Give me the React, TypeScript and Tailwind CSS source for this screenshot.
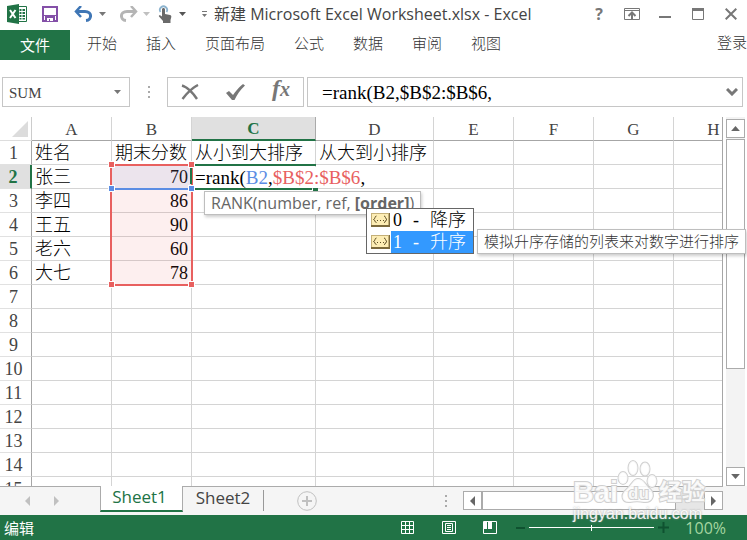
import type { ReactNode } from "react";
import clsx from "clsx";

const ribbonTabs = ["开始", "插入", "页面布局", "公式", "数据", "审阅", "视图"];

const columns = [
  { name: "A", width: "w-20" },
  { name: "B", width: "w-20" },
  { name: "C", width: "w-[124px]" },
  { name: "D", width: "w-[118px]" },
  { name: "E", width: "w-20" },
  { name: "F", width: "w-20" },
  { name: "G", width: "w-20" },
  { name: "H", width: "w-20" },
];

const cells: string[][] = [
  ["姓名", "期末分数", "从小到大排序", "从大到小排序"],
  ["张三", "70"],
  ["李四", "86"],
  ["王五", "90"],
  ["老六", "60"],
  ["大七", "78"],
];

const orderOptions = [
  { value: "0", text: "降序", active: false },
  { value: "1", text: "升序", active: true },
];

const rowNumbers = Array.from({ length: 15 }, (_, i) => i + 1);

const uiFont = "font-['Open_Sans','Noto_Sans_CJK_SC',sans-serif]";
const cellFont = "font-['Liberation_Serif','Noto_Sans_CJK_SC',serif]";

function Caret({ className }: { className?: string }) {
  return (
    <svg viewBox="0 0 7 4" className={clsx("h-1 w-[7px]", className)} fill="currentColor">
      <path d="M0 0h7L3.500 4z" />
    </svg>
  );
}

function IconButton({ label, className, children }: { label: string; className?: string; children: ReactNode }) {
  return (
    <button type="button" aria-label={label} className={clsx("grid shrink-0 place-items-center", className)}>
      {children}
    </button>
  );
}

function ExcelLogo() {
  return (
    <svg viewBox="0 0 20 20" className="size-5 shrink-0">
      <path d="M11 2.500h8.500v15H11z" fill="#fff" stroke="#217346" />
      <path d="M12.500 5h2v2h-2zm3 0h2.500v2h-2.500zm-3 3h2v2h-2zm3 0h2.500v2h-2.500zm-3 3h2v2h-2zm3 0h2.500v2h-2.500zm-3 3h2v1.500h-2zm3 0h2.500v1.500h-2.500z" fill="#217346" />
      <path d="M0 2 12 0v20L0 18z" fill="#217346" />
      <path d="m3 6 5.500 8M8.500 6 3 14" stroke="#fff" strokeWidth="2" fill="none" />
    </svg>
  );
}

function TitleBar() {
  return (
    <header className="flex h-[30px] items-start pl-[7px] pr-2 pt-1 text-[#444]">
      <ExcelLogo />
      <IconButton label="保存" className="ml-[14px] h-5 w-[18px]">
        <svg viewBox="0 0 16 16" className="size-4">
          <path d="M1 1h14v14H1z" fill="none" stroke="#8450a8" strokeWidth="2" />
          <path d="M2 9h12v1H2zM3 10h10v6H3z" fill="#8450a8" />
          <path d="M5 12h6v3H8v-2H7v2H5z" fill="#fff" />
        </svg>
      </IconButton>
      <IconButton label="撤消" className="ml-[15px] h-5 w-[18px]">
        <svg viewBox="0 0 18 16" className="h-4 w-[18px]" fill="none" stroke="#3f76b5">
          <path d="M3 5.500h8c7.500 0 7 8.500 1 9" strokeWidth="3" />
          <path d="M7 0 2 5.500 7 11" strokeWidth="2.500" />
        </svg>
      </IconButton>
      <IconButton label="撤消列表" className="ml-1 h-5 w-3">
        <Caret className="w-[5px] text-[#777]" />
      </IconButton>
      <IconButton label="重复" className="ml-3 h-5 w-[18px]">
        <svg viewBox="0 0 18 16" className="h-4 w-[18px]" fill="none" stroke="#b5b5b5">
          <path d="M15 5.500H7c-7.500 0-7 8.500-1 9" strokeWidth="3" />
          <path d="m11 0 5 5.500-5 5.500" strokeWidth="2.500" />
        </svg>
      </IconButton>
      <IconButton label="重复列表" className="ml-[2px] h-5 w-3">
        <Caret className="w-[5px] text-[#c0c0c0]" />
      </IconButton>
      <IconButton label="触摸/鼠标模式" className="ml-[6px] h-5 w-[14px]">
        <svg viewBox="0 0 14 18" className="h-[18px] w-[14px]">
          <path d="M2.500 7A3.600 3.600 0 1 1 8.500 7" fill="none" stroke="#8db4cf" strokeWidth="1.800" />
          <path d="M4 4.500c0-2 3-2 3 0V9l5 1c1 .3 1.500 1 1.300 2L12.500 15v3H5v-2L1 11.500c-.6-1 .5-1.800 1.500-1L4 11.500z" fill="#6a6a6a" />
        </svg>
      </IconButton>
      <IconButton label="模式列表" className="ml-1 h-5 w-3">
        <Caret className="w-[6px] text-[#555]" />
      </IconButton>
      <IconButton label="自定义快速访问工具栏" className="ml-[10px] h-5 w-3">
        <svg viewBox="0 0 5 6" className="h-[6px] w-[5px]" fill="#777">
          <path d="M0 0h5v1H0zM0 3h5L2.500 6z" />
        </svg>
      </IconButton>
      <h1 className="ml-1 truncate text-base leading-5">新建 Microsoft Excel Worksheet.xlsx - Excel</h1>
      <div className="ml-auto flex items-center text-[#777]">
        <IconButton label="帮助" className="h-5 w-6 text-base font-bold leading-5">
          ?
        </IconButton>
        <IconButton label="功能区显示选项" className="ml-[9px] h-5 w-6">
          <svg viewBox="0 0 16 12" className="h-3 w-4" fill="none" stroke="currentColor">
            <path d="M.5.500h15v11H.500zM1 2.500h14" />
            <path d="M8 11V5M4.500 8 8 4.500 11.500 8" strokeWidth="2" />
          </svg>
        </IconButton>
        <IconButton label="最小化" className="ml-[9px] h-5 w-6">
          <svg viewBox="0 0 12 12" className="size-3" fill="currentColor">
            <path d="M0 8h12v2H0z" />
          </svg>
        </IconButton>
        <IconButton label="最大化" className="ml-[9px] h-5 w-6">
          <svg viewBox="0 0 12 12" className="size-3" fill="none" stroke="currentColor">
            <path d="M.5.500h11v11H.500z" />
            <path d="M0 1.500h12" strokeWidth="3" />
          </svg>
        </IconButton>
        <IconButton label="关闭" className="ml-[13px] h-5 w-4">
          <svg viewBox="0 0 12 12" className="size-3" fill="none" stroke="currentColor" strokeWidth="2">
            <path d="m.7.700 10.600 10.600M11.300.700.700 11.300" />
          </svg>
        </IconButton>
      </div>
    </header>
  );
}

function Ribbon() {
  return (
    <nav className="flex h-[30px] items-center overflow-hidden whitespace-nowrap text-[15px] text-[#333]">
      <button type="button" className="h-full w-[70px] bg-[#217346] text-white">
        文件
      </button>
      <div className="ml-[17px] flex gap-[29px] pb-1 font-light">
        {ribbonTabs.map((tab) => (
          <button type="button" key={tab}>
            {tab}
          </button>
        ))}
      </div>
      <a href="#login" className="ml-auto pb-[6px] font-light">
        登录
      </a>
    </nav>
  );
}

function FormulaBar() {
  return (
    <div className="mt-[17px] flex h-[30px] pl-[2px] pr-1">
      <div className="flex w-32 items-center border border-[#c6c6c6]">
        <input
          aria-label="名称框"
          defaultValue="SUM"
          className={clsx("w-24 bg-transparent pl-[6px] pt-[2px] text-[15px] text-[#444] outline-none", cellFont)}
        />
        <IconButton label="名称列表" className="ml-auto size-6">
          <Caret className="text-[#777]" />
        </IconButton>
      </div>
      <div className="flex w-[37px] flex-col items-center justify-center gap-[3px]">
        <span className="size-[2px] bg-[#aaa]" />
        <span className="size-[2px] bg-[#aaa]" />
        <span className="size-[2px] bg-[#aaa]" />
      </div>
      <div className="flex w-[137px] items-center justify-between border border-[#c6c6c6] px-[10px] text-[#777]">
        <IconButton label="取消" className="size-6">
          <svg viewBox="0 0 18 16" className="h-4 w-[18px]" fill="none" stroke="currentColor" strokeWidth="2.400">
            <path d="M1 1.500C6 3 12 9 16 15M17 1C11 4 6 9 1.500 15" />
          </svg>
        </IconButton>
        <IconButton label="输入" className="size-6">
          <svg viewBox="0 0 19 17" className="h-[17px] w-[19px]" fill="currentColor">
            <path d="M0 9 3 7l4 4C10 7 13 3 17 0l2 1.500C14 6 11 11 8.500 16H6z" />
          </svg>
        </IconButton>
        <IconButton
          label="插入函数"
          className="size-6 pb-2 font-['Liberation_Serif',serif] text-2xl font-bold italic leading-4"
        >
          <span>
            f<span className="text-xl leading-4">x</span>
          </span>
        </IconButton>
      </div>
      <div className="ml-[3px] flex min-w-0 flex-1 items-center border border-[#c6c6c6]">
        <input
          aria-label="编辑栏"
          defaultValue="=rank(B2,$B$2:$B$6,"
          className={clsx("min-w-0 flex-1 bg-transparent pl-[14px] pt-[2px] text-[19px] text-black outline-none", cellFont)}
        />
        <IconButton label="展开编辑栏" className="h-6 w-5">
          <svg viewBox="0 0 12 8" className="h-2 w-3" fill="none" stroke="#777" strokeWidth="3">
            <path d="m1 1 5 5 5-5" />
          </svg>
        </IconButton>
      </div>
    </div>
  );
}

function Grid() {
  return (
    <table className={clsx("w-[714px] table-fixed border-separate border-spacing-0 text-lg leading-[21px]", cellFont)}>
      <colgroup>
        <col className="w-8" />
        {columns.map((col) => (
          <col key={col.name} className={col.width} />
        ))}
      </colgroup>
      <thead>
        <tr className="text-[17px] text-[#444]">
          <td className="h-6 border-b border-r border-b-[#ddd] border-r-[#ccc] p-0">
            <svg viewBox="0 0 16 16" className="ml-3 size-4">
              <path d="M16 0v16H0z" fill="#dcdcdc" />
            </svg>
          </td>
          {columns.map(({ name }) => (
            <th
              key={name}
              scope="col"
              className={clsx(
                "h-6 border-r p-0 pt-[2px]",
                name === "C"
                  ? "border-b-2 border-b-[#217346] border-r-[#aaa] bg-[#e0e0e0] font-bold leading-5 text-[#217346]"
                  : "border-b border-b-[#a6a6a6] border-r-[#d4d4d4] font-normal",
              )}
            >
              {name}
            </th>
          ))}
        </tr>
      </thead>
      <tbody>
        {rowNumbers.map((row) => (
          <tr key={row}>
            <th
              scope="row"
              className={clsx(
                "h-6 border-b border-r border-b-[#e1e1e1] p-0 pr-1 pt-[2px]",
                row === 2
                  ? "border-r-2 border-r-[#217346] bg-[#e0e0e0] font-bold text-[#217346]"
                  : "border-r-[#a6a6a6] font-normal text-[#444]",
              )}
            >
              {row}
            </th>
            {columns.map(({ name }, i) => (
              <td
                key={name}
                className={clsx(
                  "h-6 whitespace-nowrap border-b border-r border-[#d4d4d4] p-0 px-[3px] pt-[2px] font-light text-black",
                  name === "B" && row > 1 && "text-right",
                )}
              >
                {name === "C" && row === 2 ? (
                  <div className="relative z-10 w-[175px] bg-white text-[19px]">
                    =rank(<span className="text-[#5b8de4]">B2</span>,<span className="text-[#e8605f]">$B$2:$B$6</span>,
                  </div>
                ) : (
                  cells[row - 1]?.[i]
                )}
              </td>
            ))}
          </tr>
        ))}
      </tbody>
    </table>
  );
}

// Coloured outlines for the ranges referenced by the formula, and the edited cell
function RangeMarks() {
  const handle = "absolute size-[7px] border border-white";
  return (
    <div aria-hidden className="pointer-events-none">
      <div className="absolute left-[110px] top-[47px] h-[122px] w-[83px] border-2 border-[#e8605f] bg-[#e8605f]/10" />
      <div className="absolute left-28 top-[49px] h-6 w-[79px] border-b-2 border-[#5b8de4] bg-[#5b8de4]/10" />
      <div className="absolute left-[190px] top-[51px] h-4 w-[2px] bg-[#217346]" />
      <div className="absolute left-[195px] top-[47px] z-10 h-[2px] w-[121px] bg-[#217346]" />
      <div className="absolute left-[195px] top-[71px] z-10 h-[2px] w-[117px] bg-[#217346]" />
      <span className="absolute left-[313px] top-[71px] z-10 h-[3px] w-[5px] bg-[#217346]" />
      <span className={clsx(handle, "left-[108px] top-[44px] bg-[#e8605f]")} />
      <span className={clsx(handle, "left-[188px] top-[44px] bg-[#e8605f]")} />
      <span className={clsx(handle, "left-[108px] top-[164px] bg-[#e8605f]")} />
      <span className={clsx(handle, "left-[188px] top-[164px] bg-[#e8605f]")} />
      <span className={clsx(handle, "left-[108px] top-[68px] bg-[#5b8de4]")} />
      <span className={clsx(handle, "left-[188px] top-[68px] bg-[#5b8de4]")} />
    </div>
  );
}

function EnumIcon() {
  return (
    <svg viewBox="0 0 19 14" className="h-[14px] w-[19px] shrink-0">
      <path d="M0 0h19v14H0z" fill="#7c6a3c" />
      <path d="M0 0h18v12H0z" fill="#c4b078" />
      <path d="M1 1h16v11H1z" fill="#fdedb4" />
      <path d="M5.500 3C3.500 3 4.500 6 2.500 6.500 4.500 7 3.500 9.500 5.500 9.500M13 3c2 0 1 3 3 3.500-2 .5-1 3-3 3" fill="none" stroke="#5c4d24" />
      <path d="M6 7h1v1H6zm3 0h1v1H9zm3 0h1v1h-1z" fill="#5c4d24" />
    </svg>
  );
}

function FormulaHints() {
  const tip = "absolute z-20 whitespace-nowrap border border-[#bebebe] bg-white px-[6px] shadow-[1px_2px_3px_rgba(0,0,0,0.2)]";
  return (
    <div>
      <div role="tooltip" className={clsx(tip, "left-[204px] top-[74px] text-base leading-[22px] text-[#666]")}>
        RANK(number, ref, <b>[order]</b>)
      </div>
      <ul
        role="listbox"
        aria-label="order"
        className={clsx("absolute left-[366px] top-[91px] z-20 w-[108px] border border-[#666] bg-white text-lg font-light leading-[22px]", cellFont)}
      >
        {orderOptions.map((option) => (
          <li key={option.value} role="option" aria-selected={option.active} className="flex items-center pl-1">
            <EnumIcon />
            <span
              className={clsx(
                "ml-px flex flex-1 gap-[11px] pl-[2px]",
                option.active ? "bg-[#3399ff] text-white" : "text-black",
              )}
            >
              <span>{option.value}</span>
              <span>-</span>
              <span>{option.text}</span>
            </span>
          </li>
        ))}
      </ul>
      <div role="tooltip" className={clsx(tip, "left-[477px] top-28 text-[15px] font-light leading-[23px] text-[#333]")}>
        模拟升序存储的列表来对数字进行排序
      </div>
    </div>
  );
}

function VerticalScroll() {
  const button = "h-[19px] w-full border border-[#ababab] bg-white text-[#666]";
  return (
    <div className="flex w-[19px] flex-col bg-[#f3f3f3] pt-[2px]">
      <IconButton label="向上滚动" className={button}>
        <Caret className="h-[5px] w-[9px] rotate-180" />
      </IconButton>
      <div className="mt-px h-[230px] border border-[#ababab] bg-white" />
      <IconButton label="向下滚动" className={clsx(button, "mt-auto")}>
        <Caret className="h-[5px] w-[9px]" />
      </IconButton>
    </div>
  );
}

function Arrow({ left }: { left?: boolean }) {
  return (
    <svg viewBox="0 0 5 10" className={clsx("h-[10px] w-[5px]", left && "rotate-180")} fill="currentColor">
      <path d="M0 0v10l5-5z" />
    </svg>
  );
}

function SheetTabs() {
  return (
    <div className="flex h-[29px] bg-[#f5f5f5] pr-6">
      <div className="flex flex-1 border-t border-[#ababab]">
        <div className="flex w-[100px] items-center gap-6 pl-[25px] text-[#c0c0c0]">
          <IconButton label="上一张工作表" className="h-5 w-[5px]">
            <Arrow left />
          </IconButton>
          <IconButton label="下一张工作表" className="h-5 w-[5px]">
            <Arrow />
          </IconButton>
        </div>
        <button
          type="button"
          className="-mt-px h-[26px] w-[83px] border-x border-b-2 border-x-[#ababab] border-b-[#217346] bg-white pb-[2px] pr-1 text-[17px] leading-5 text-[#217346]"
        >
          Sheet1
        </button>
        <button type="button" className="mt-[3px] h-[21px] w-[81px] border-r border-[#999] pb-2 text-[17px] leading-4 text-[#444]">
          Sheet2
        </button>
        <IconButton label="新工作表" className="ml-8 mt-[3px] size-[22px]">
          <svg viewBox="0 0 20 20" className="size-5" fill="none" stroke="#c0c0c0">
            <circle cx="10" cy="10" r="9.300" />
            <path d="M10 5v10M5 10h10" strokeWidth="2" />
          </svg>
        </IconButton>
        <div className="ml-auto mr-4 flex flex-col items-center justify-center gap-[3px]">
          <span className="size-[2px] bg-[#aaa]" />
          <span className="size-[2px] bg-[#aaa]" />
          <span className="size-[2px] bg-[#aaa]" />
        </div>
        <div className="mt-1 flex h-[19px] w-[260px] bg-[#e6e6e6] text-[#666]">
          <IconButton label="向左滚动" className="w-[19px] border border-[#ababab] bg-white">
            <Arrow left />
          </IconButton>
          <div className="w-[194px] border border-[#ababab] bg-white" />
          <IconButton label="向右滚动" className="ml-auto w-[19px] border border-[#ababab] bg-white">
            <Arrow />
          </IconButton>
        </div>
      </div>
    </div>
  );
}

function StatusBar() {
  return (
    <footer className="flex h-[25px] items-center bg-[#217346] pl-1 pr-[21px] text-white">
      <span className="text-[15px] leading-6">编辑</span>
      <div className="ml-auto flex items-center">
        <IconButton label="普通" className="size-[13px]">
          <svg viewBox="0 0 13 13" className="size-[13px]" fill="none" stroke="#fff">
            <path d="M.5.500h12v12H.500zM0 4.500h13M0 8.500h13M4.500 0v13M8.500 0v13" />
          </svg>
        </IconButton>
        <IconButton label="页面布局" className="ml-7 h-[13px] w-[14px]">
          <svg viewBox="0 0 14 13" className="h-[13px] w-[14px]" fill="none" stroke="#fff">
            <path d="M.5.500h13v12H.500zM3.500 2.500h7v8h-7zM5 4.500h4M5 6.500h4M5 8.500h4" />
          </svg>
        </IconButton>
        <IconButton label="分页预览" className="ml-[27px] h-[13px] w-[14px]">
          <svg viewBox="0 0 14 13" className="h-[13px] w-[14px]">
            <path d="M.5.500h13v12H.500z" fill="none" stroke="#fff" />
            <path d="M1 1h3v7H1zm4 0h4v7H5z" fill="#fff" />
          </svg>
        </IconButton>
        <IconButton label="缩小" className="ml-[19px] h-3 w-[9px]">
          <span className="h-[2px] w-[9px] bg-[#0f5230]" />
        </IconButton>
        <input
          type="range"
          aria-label="显示比例"
          min={0}
          max={200}
          defaultValue={100}
          className="mx-1 h-3 w-[125px] appearance-none bg-[linear-gradient(#fff,#fff)] bg-[length:100%_1px] bg-center bg-no-repeat [&::-webkit-slider-thumb]:h-[6px] [&::-webkit-slider-thumb]:w-px [&::-webkit-slider-thumb]:appearance-none [&::-webkit-slider-thumb]:bg-white"
        />
        <IconButton label="放大" className="size-[11px]">
          <svg viewBox="0 0 11 11" className="size-[11px]" stroke="#0f5230" strokeWidth="2">
            <path d="M5.500 0v11M0 5.500h11" />
          </svg>
        </IconButton>
        <span className="ml-4 text-base leading-6 text-[#a5d6a0]">100%</span>
      </div>
    </footer>
  );
}

function Watermark() {
  return (
    <div className="pointer-events-none absolute bottom-[18px] right-[40px] z-30 w-[134px] text-white/90">
      <svg
        viewBox="0 0 134 48"
        className="h-12 w-full"
        fill="#fff"
        fillOpacity=".85"
        stroke="#d0d0d0"
        strokeWidth="2"
        paintOrder="stroke"
        fontWeight="700"
      >
        <ellipse cx="50" cy="20" rx="4.500" ry="6" />
        <ellipse cx="60" cy="10" rx="4.500" ry="7" />
        <ellipse cx="72" cy="11" rx="4.500" ry="6.500" />
        <ellipse cx="79" cy="23" rx="4.500" ry="6" />
        <path d="M65 21c-5 0-6 6-12 11-6 5-4 13 4 12 5-1 9-1 14 0 8 1 12-7 6-13-5-4-6-10-12-10z" />
        <text x="0" y="44" fontSize="29" fontFamily="Liberation Sans, sans-serif">
          Bai
        </text>
        <text x="55" y="41" fontSize="17" fontFamily="Liberation Sans, sans-serif">
          du
        </text>
        <text x="86" y="42" fontSize="23" fontFamily="Noto Sans CJK SC, sans-serif">
          经验
        </text>
      </svg>
      <p className="whitespace-nowrap font-['Liberation_Sans',sans-serif] text-base leading-4 [text-shadow:0_0_2px_#999]">
        jingyan.baidu.com
      </p>
    </div>
  );
}

export default function App() {
  return (
    <div className={clsx("relative flex h-screen flex-col overflow-hidden bg-white", uiFont)}>
      <TitleBar />
      <Ribbon />
      <FormulaBar />
      <main className="relative mt-[10px] flex min-h-0 flex-1 pr-[2px]">
        <div className="mr-[3px] min-w-0 flex-1 overflow-hidden border-r border-[#a6a6a6]">
          <Grid />
        </div>
        <VerticalScroll />
        <RangeMarks />
        <FormulaHints />
      </main>
      <SheetTabs />
      <StatusBar />
      <Watermark />
    </div>
  );
}
